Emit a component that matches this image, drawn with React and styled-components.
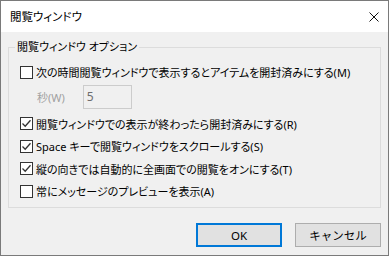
import React from 'react';
import styled, { createGlobalStyle } from 'styled-components';

const GlobalStyle = createGlobalStyle`
  html, body {
    margin: 0;
    padding: 0;
    background: #ffffff;
  }
  body {
    font-family: "Noto Sans", "Noto Sans CJK JP", sans-serif;
    font-size: 11px;
    color: #000000;
    font-feature-settings: "palt";
  }
`;

const Window = styled.div`
  box-sizing: border-box;
  width: 389px;
  height: 256px;
  border: 1px solid #7a7a7a;
  display: flex;
  flex-direction: column;
  background: #f0f0f0;
`;

const TitleBar = styled.div`
  height: 31px;
  background: #ffffff;
  display: flex;
  align-items: center;
  justify-content: space-between;
  padding: 0 9px 0 9px;
`;

const Title = styled.span`
  font-size: 11.5px;
  line-height: 16px;
`;

const Body = styled.div`
  flex: 1;
  display: flex;
  flex-direction: column;
  padding: 7px 7px 8px 7px;
`;

const Group = styled.fieldset`
  margin: 0;
  padding: 6px 8px 4px 11px;
  border: 1px solid #dcdcdc;
  min-width: 0;
`;

const Legend = styled.legend`
  padding: 0 2px;
  margin-left: -5px;
  line-height: 16px;
`;

const Row = styled.label`
  display: flex;
  align-items: center;
  height: 22.5px;
  gap: 3px;
  white-space: nowrap;
`;

const Box = styled.span`
  box-sizing: border-box;
  width: 13px;
  height: 13px;
  border: 1px solid #333333;
  background: #ffffff;
  display: flex;
  align-items: center;
  justify-content: center;
  flex: none;
`;

const SubRow = styled.div`
  display: flex;
  align-items: center;
  height: 26px;
  margin-bottom: 3px;
  padding-left: 17px;
  gap: 18px;
  color: #a0a0a0;
`;

const Field = styled.div`
  box-sizing: border-box;
  width: 49px;
  height: 24px;
  border: 1px solid #cccccc;
  background: #f0f0f0;
  color: #6d6d6d;
  display: flex;
  align-items: center;
  padding-left: 3px;
  font-size: 12px;
`;

const Buttons = styled.div`
  margin-top: auto;
  display: flex;
  justify-content: flex-end;
  gap: 13px;
`;

const Button = styled.button`
  box-sizing: border-box;
  width: 86px;
  height: 24px;
  font-family: inherit;
  font-size: 11.5px;
  color: #000000;
  background: #e1e1e1;
  border: 1px solid ${p => (p.$primary ? '#0078d7' : '#adadad')};
  box-shadow: ${p => (p.$primary ? 'inset 0 0 0 1px #0078d7' : 'none')};
  padding: 0;
`;

function Check({ checked }) {
  return (
    <Box>
      {checked && (
        <svg width="11" height="11" viewBox="0 0 11 11">
          <path d="M1.5 5.5 L4.2 8.2 L9.5 2.2" fill="none" stroke="#333" strokeWidth="1.3" />
        </svg>
      )}
    </Box>
  );
}

const options = [
  { text: '閲覧ウィンドウでの表示が終わったら開封済みにする(R)', checked: true },
  { text: 'Space キーで閲覧ウィンドウをスクロールする(S)', checked: true },
  { text: '縦の向きでは自動的に全画面での閲覧をオンにする(T)', checked: true },
  { text: '常にメッセージのプレビューを表示(A)', checked: false },
];

export default function App() {
  return (
    <>
      <GlobalStyle />
      <Window>
        <TitleBar>
          <Title>閲覧ウィンドウ</Title>
          <svg width="10" height="10" viewBox="0 0 10 10">
            <path d="M0.5 0.5 L9.5 9.5 M9.5 0.5 L0.5 9.5" stroke="#111" strokeWidth="1" />
          </svg>
        </TitleBar>
        <Body>
          <Group>
            <Legend>閲覧ウィンドウ オプション</Legend>
            <Row>
              <Check checked={false} />
              次の時間閲覧ウィンドウで表示するとアイテムを開封済みにする(M)
            </Row>
            <SubRow>
              秒(W)
              <Field>5</Field>
            </SubRow>
            {options.map(o => (
              <Row key={o.text}>
                <Check checked={o.checked} />
                {o.text}
              </Row>
            ))}
          </Group>
          <Buttons>
            <Button $primary>OK</Button>
            <Button>キャンセル</Button>
          </Buttons>
        </Body>
      </Window>
    </>
  );
}
